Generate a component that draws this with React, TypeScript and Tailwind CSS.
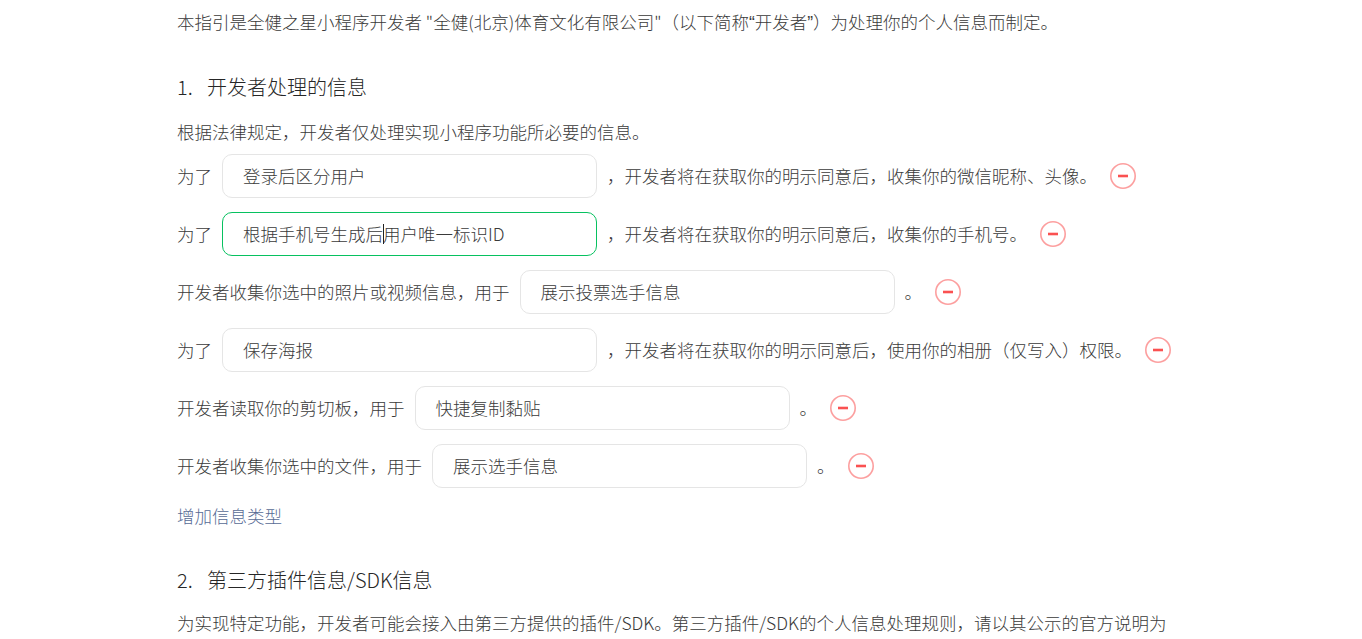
import React from "react";

const MinusIcon = () => (
  <svg width="28" height="28" viewBox="0 0 28 28" className="ml-[12px] shrink-0">
    <circle cx="14" cy="14" r="12.2" fill="none" stroke="#fa5151" strokeOpacity="0.55" strokeWidth="1.6" />
    <line x1="9" y1="14" x2="19" y2="14" stroke="#fa5151" strokeWidth="2.6" strokeLinecap="butt" />
  </svg>
);

const Field = ({ value, caretAfter, focused }: { value: string; caretAfter?: number; focused?: boolean }) => (
  <div
    className={
      "mx-[10px] flex h-[44px] w-[375px] shrink-0 items-center rounded-[10px] border bg-white pl-[20px] " +
      (focused ? "border-[#07c160]" : "border-[#e5e5e5]")
    }
  >
    {caretAfter !== undefined ? (
      <>
        <span>{value.slice(0, caretAfter)}</span>
        <span className="-mr-px inline-block h-[20px] w-px bg-[#222]" />
        <span>{value.slice(caretAfter)}</span>
      </>
    ) : (
      <span>{value}</span>
    )}
  </div>
);

const Row = ({ before, value, after, caretAfter, focused, first }: { before: string; value: string; after: string; caretAfter?: number; focused?: boolean; first?: boolean }) => (
  <div className={"flex h-[44px] items-center whitespace-nowrap " + (first ? "mt-[8px]" : "mt-[14px]")}>
    <span>{before}</span>
    <Field value={value} caretAfter={caretAfter} focused={focused} />
    <span>{after}</span>
    <MinusIcon />
  </div>
);

const Q = ({ c }: { c: string }) => <span style={{ fontFamily: '"Liberation Sans", sans-serif' }}>{c}</span>;

export default function App() {
  return (
    <div
      className="min-h-[639px] bg-white pl-[177px] text-[17.5px] font-light leading-[28px] text-[#3a3a3a]"
      style={{ fontFamily: '"Noto Sans CJK SC", "Noto Sans", sans-serif' }}
    >
      <div className="w-[1000px] pt-[8px]">
        <p>
          本指引是全健之星小程序开发者 "全健(北京)体育文化有限公司"（以下简称<Q c="“" />开发者<Q c="”" />）为处理你的个人信息而制定。
        </p>
        <h2 className="mt-[36px] flex text-[20px] leading-[28px] text-[#262626]">
          <span className="w-[30px]">1.</span>
          <span>开发者处理的信息</span>
        </h2>
        <p className="mt-[17px]">根据法律规定，开发者仅处理实现小程序功能所必要的信息。</p>
        <Row first before="为了" value="登录后区分用户" after="，开发者将在获取你的明示同意后，收集你的微信昵称、头像。" />
        <Row before="为了" value="根据手机号生成后用户唯一标识ID" caretAfter={8} focused after="，开发者将在获取你的明示同意后，收集你的手机号。" />
        <Row before="开发者收集你选中的照片或视频信息，用于" value="展示投票选手信息" after="。" />
        <Row before="为了" value="保存海报" after="，开发者将在获取你的明示同意后，使用你的相册（仅写入）权限。" />
        <Row before="开发者读取你的剪切板，用于" value="快捷复制黏贴" after="。" />
        <Row before="开发者收集你选中的文件，用于" value="展示选手信息" after="。" />
        <p className="mt-[14px] text-[#576b95]">增加信息类型</p>
        <h2 className="mt-[36px] flex text-[20px] leading-[28px] text-[#262626]">
          <span className="w-[30px]">2.</span>
          <span>第三方插件信息/SDK信息</span>
        </h2>
        <p className="mt-[15px]">为实现特定功能，开发者可能会接入由第三方提供的插件/SDK。第三方插件/SDK的个人信息处理规则，请以其公示的官方说明为准。</p>
      </div>
    </div>
  );
}
